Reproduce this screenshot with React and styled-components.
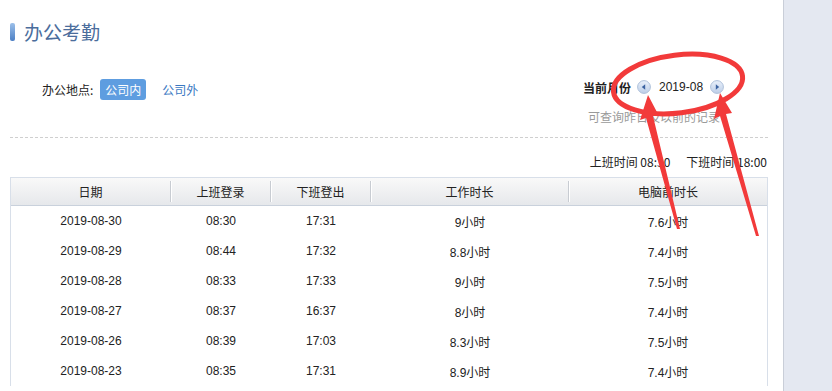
import React from "react";
import styled, { createGlobalStyle } from "styled-components";

const GlobalStyle = createGlobalStyle`
  html, body {
    margin: 0;
    padding: 0;
    background: #fff;
    font-family: "Liberation Sans", "Noto Sans CJK SC", sans-serif;
    font-size: 12px;
    color: #222;
  }
  * { box-sizing: border-box; }
`;

const records = [
  { date: "2019-08-30", on: "08:30", off: "17:31", work: "9小时", pc: "7.6小时" },
  { date: "2019-08-29", on: "08:44", off: "17:32", work: "8.8小时", pc: "7.4小时" },
  { date: "2019-08-28", on: "08:33", off: "17:33", work: "9小时", pc: "7.5小时" },
  { date: "2019-08-27", on: "08:37", off: "16:37", work: "8小时", pc: "7.4小时" },
  { date: "2019-08-26", on: "08:39", off: "17:03", work: "8.3小时", pc: "7.5小时" },
  { date: "2019-08-23", on: "08:35", off: "17:31", work: "8.9小时", pc: "7.4小时" },
];

const columns = [
  { key: "date", title: "日期", width: 160 },
  { key: "on", title: "上班登录", width: 100 },
  { key: "off", title: "下班登出", width: 100 },
  { key: "work", title: "工作时长", width: 198 },
  { key: "pc", title: "电脑前时长", width: 198 },
];

const ArrowBtn = ({ dir }) => (
  <RoundBtn>
    <svg width="14" height="14" viewBox="0 0 14 14">
      <defs>
        <linearGradient id={`g${dir}`} x1="0" y1="0" x2="0" y2="1">
          <stop offset="0" stopColor="#e9f0fa" />
          <stop offset="1" stopColor="#bccee8" />
        </linearGradient>
      </defs>
      <circle cx="7" cy="7" r="6.4" fill={`url(#g${dir})`} stroke="#aec0da" />
      {dir === "left" ? (
        <path d="M4.8 7 L8.2 4.3 L8.2 9.7 Z" fill="#3b62a0" />
      ) : (
        <path d="M9.2 7 L5.8 4.3 L5.8 9.7 Z" fill="#3b62a0" />
      )}
    </svg>
  </RoundBtn>
);

const App = () => {
  return (
    <Page>
      <GlobalStyle />
      <Main>
        <TitleRow>
          <TitleBar />
          <Title>办公考勤</Title>
        </TitleRow>

        <FilterRow>
          <Place>
            <PlaceLabel>办公地点:</PlaceLabel>
            <PlaceTab active>公司内</PlaceTab>
            <PlaceTab>公司外</PlaceTab>
          </Place>
          <MonthBox>
            <MonthLine>
              <MonthLabel>当前月份</MonthLabel>
              <ArrowBtn dir="left" />
              <MonthValue>2019-08</MonthValue>
              <ArrowBtn dir="right" />
            </MonthLine>
            <Hint>可查询昨日及以前的记录</Hint>
          </MonthBox>
        </FilterRow>

        <Divider />

        <ScheduleLine>
          <span>上班时间 08:30</span>
          <span>下班时间 18:00</span>
        </ScheduleLine>

        <Table>
          <HeadRow>
            {columns.map((c, i) => (
              <HeadCell key={c.key} w={c.width} last={i === columns.length - 1}>
                {c.title}
              </HeadCell>
            ))}
          </HeadRow>
          {records.map((r) => (
            <Row key={r.date}>
              {columns.map((c) => (
                <Cell key={c.key} w={c.width}>
                  {r[c.key]}
                </Cell>
              ))}
            </Row>
          ))}
        </Table>

        <Marks width="832" height="391" viewBox="0 0 832 391">
          <ellipse
            cx="678"
            cy="84"
            rx="65"
            ry="29"
            transform="rotate(-7 678 84)"
            fill="none"
            stroke="#f23a3a"
            strokeWidth="5"
          />
          <polygon points="648,95 659,116 653,116 680,229 677,229 646,118 640,120" fill="#f23a3a" />
          <polygon points="720,93 732,113 726,114 759,236 756,236 720,116 714,119" fill="#f23a3a" />
        </Marks>
      </Main>
      <Side />
    </Page>
  );
};

export default App;

const Page = styled.div`
  display: flex;
  width: 832px;
  height: 391px;
  overflow: hidden;
`;

const Main = styled.div`
  position: relative;
  width: 784px;
  padding: 22px 0 0 10px;
  border-right: 1px solid #c9ced8;
`;

const Side = styled.div`
  flex: 1;
  background: #e4e8f1;
`;

const TitleRow = styled.div`
  display: flex;
  align-items: center;
  height: 20px;
`;

const TitleBar = styled.div`
  width: 5px;
  height: 18px;
  border-radius: 2px;
  background: linear-gradient(to bottom, #9cc0ea, #4c7fc4);
`;

const Title = styled.h1`
  margin: 0 0 0 9px;
  font-family: "Noto Sans CJK SC", sans-serif;
  font-size: 19px;
  font-weight: normal;
  color: #4b6d9c;
  line-height: 20px;
`;

const FilterRow = styled.div`
  display: flex;
  justify-content: space-between;
  align-items: flex-start;
  width: 757px;
  margin-top: 37px;
`;

const Place = styled.div`
  display: flex;
  align-items: center;
  padding-left: 32px;
  height: 21px;
`;

const PlaceLabel = styled.span`
  font-family: "Noto Sans CJK SC", sans-serif;
  margin-right: 7px;
`;

const PlaceTab = styled.span`
  display: inline-block;
  height: 21px;
  line-height: 21px;
  padding: 0 5px;
  margin-right: 11px;
  border-radius: 3px;
  font-family: "Noto Sans CJK SC", sans-serif;
  background: ${(p) => (p.active ? "#5e9de0" : "transparent")};
  color: ${(p) => (p.active ? "#fff" : "#3a78c2")};
`;

const MonthBox = styled.div`
  display: flex;
  flex-direction: column;
  width: 184px;
  margin-top: -2px;
`;

const MonthLine = styled.div`
  display: flex;
  align-items: center;
  height: 20px;
`;

const MonthLabel = styled.span`
  font-family: "Noto Sans CJK SC", sans-serif;
  font-weight: bold;
  margin-right: 6px;
`;

const RoundBtn = styled.span`
  display: inline-flex;
  width: 14px;
  height: 14px;
`;

const MonthValue = styled.span`
  margin: 0 7px 0 8px;
`;

const Hint = styled.div`
  margin-top: 11px;
  padding-left: 5px;
  color: #9a9a9a;
  font-family: "Noto Sans CJK SC", sans-serif;
`;

const Divider = styled.div`
  width: 758px;
  margin-top: 12px;
  border-top: 1px dashed #cfcfcf;
`;

const ScheduleLine = styled.div`
  display: flex;
  justify-content: flex-end;
  gap: 16px;
  width: 757px;
  margin-top: 15px;
  height: 18px;
  line-height: 18px;
  font-family: "Noto Sans CJK SC", sans-serif;
`;

const Table = styled.div`
  width: 758px;
  margin-top: 6px;
  border-left: 1px solid #d8dfe9;
  border-right: 1px solid #d8dfe9;
  border-top: 1px solid #d8dfe9;
`;

const HeadRow = styled.div`
  display: flex;
  height: 28px;
  background: linear-gradient(to bottom, #f9f9f9, #e6e8eb);
  border-bottom: 1px solid #c9d1dc;
`;

const HeadCell = styled.div`
  width: ${(p) => p.w}px;
  flex: none;
  display: flex;
  align-items: center;
  justify-content: center;
  font-family: "Noto Sans CJK SC", sans-serif;
  border-right: ${(p) => (p.last ? "none" : "1px solid #c8ccd2")};
  box-shadow: ${(p) => (p.last ? "none" : "1px 0 0 #fff")};
  margin: 3px 0;
`;

const Row = styled.div`
  display: flex;
  height: 30px;
`;

const Cell = styled.div`
  width: ${(p) => p.w}px;
  flex: none;
  display: flex;
  align-items: center;
  justify-content: center;
`;

const Marks = styled.svg`
  position: absolute;
  left: 0;
  top: 0;
  pointer-events: none;
`;
